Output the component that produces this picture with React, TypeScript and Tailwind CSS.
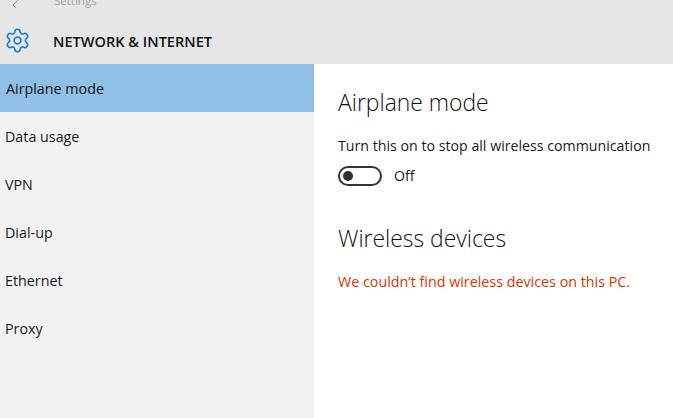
import { Settings } from "lucide-react";

const items = ["Data usage", "VPN", "Dial-up", "Ethernet", "Proxy"];

export default function App() {
  return (
    <div className="w-[673px] h-[418px] overflow-hidden flex flex-col bg-white text-[14.3px] text-[#1a1a1a] font-['Open_Sans','Noto_Sans',sans-serif]">
      <header className="h-[64px] shrink-0 bg-[#e6e6e6] flex flex-col">
        <div className="h-[17px] -mt-[8px] flex items-center text-[11.5px] text-[#a0a0a0]">
          <svg width="12" height="14" viewBox="0 0 12 14" className="ml-[10px]" fill="none" stroke="#8a8a8a" strokeWidth="1">
            <path d="M8 6 L3 11 L8 16" />
          </svg>
          <span className="ml-[32px]">Settings</span>
        </div>
        <div className="flex items-center mt-[18px]">
          <Settings className="ml-[4px] mb-[2px] w-[27px] h-[27px] text-[#1e7fd4]" strokeWidth={1.5} />
          <span className="ml-[22px] text-[14.55px] font-semibold text-[#111]">NETWORK &amp; INTERNET</span>
        </div>
      </header>
      <div className="flex flex-1 min-h-0">
        <nav className="w-[314px] shrink-0 bg-[#f2f2f2]">
          <div className="h-[48px] bg-[#90c0e8] flex items-center pl-[6px] pt-[1px] text-[#111]">Airplane mode</div>
          {items.map((item) => (
            <div key={item} className="h-[48px] flex items-center pl-[5px] pt-[1px]">{item}</div>
          ))}
        </nav>
        <main className="flex-1 pl-[24px] pt-[23px]">
          <h1 className="text-[22.9px] font-light leading-[32px] text-[#111]">Airplane mode</h1>
          <p className="mt-[17px] leading-[20px] text-[14.2px]">Turn this on to stop all wireless communication</p>
          <div className="mt-[9px] flex items-center h-[22px]">
            <div className="w-[44px] h-[20px] rounded-full border-2 border-[#333] flex items-center pl-[3px]">
              <div className="w-[10px] h-[10px] rounded-full bg-[#333]" />
            </div>
            <span className="ml-[12px] text-[14.2px]">Off</span>
          </div>
          <h2 className="mt-[36px] text-[22.9px] font-light leading-[32px] text-[#111]">Wireless devices</h2>
          <p className="mt-[17px] leading-[20px] text-[14.3px] text-[#e13200]">We couldn’t find wireless devices on this PC.</p>
        </main>
      </div>
    </div>
  );
}
